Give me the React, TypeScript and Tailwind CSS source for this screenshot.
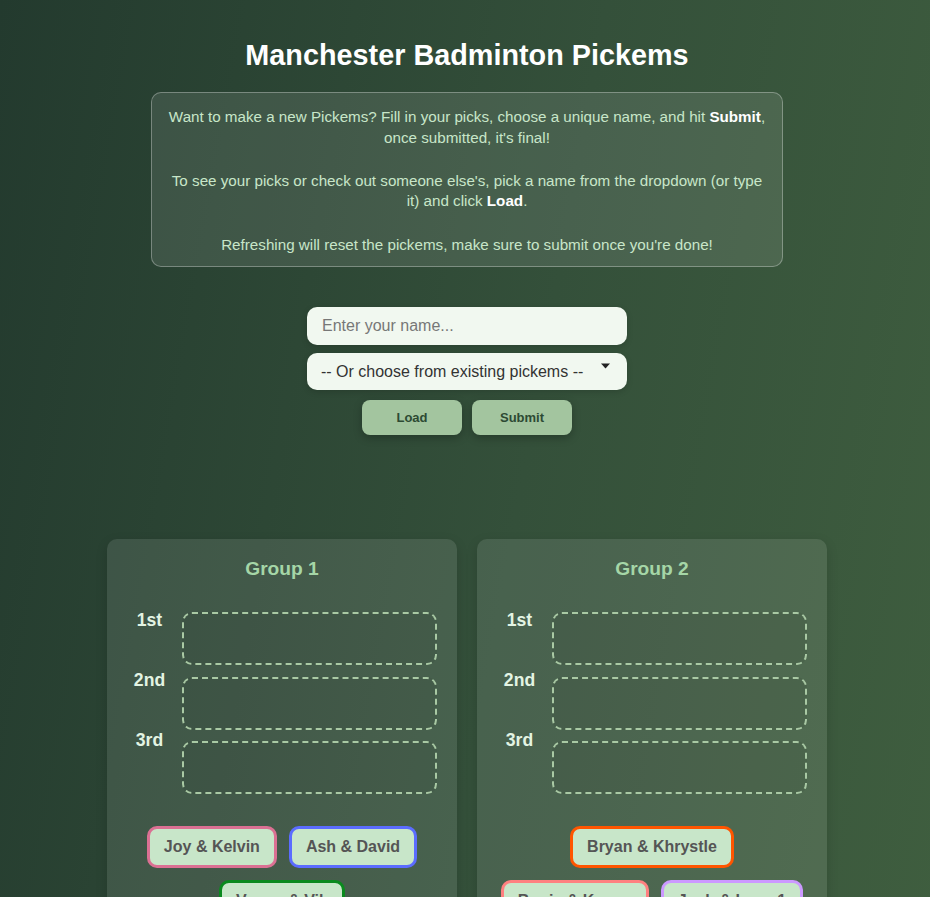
import React from "react";

const slots = ["1st", "2nd", "3rd"];

type Chip = { name: string; color: string };

const groups: { title: string; rows: Chip[][] }[] = [
  {
    title: "Group 1",
    rows: [
      [
        { name: "Joy & Kelvin", color: "border-[#db7093]" },
        { name: "Ash & David", color: "border-[#5b6cff]" },
      ],
      [{ name: "Vonne & Vik", color: "border-[#0a8a1e]" }],
    ],
  },
  {
    title: "Group 2",
    rows: [
      [{ name: "Bryan & Khrystle", color: "border-[#ff5500]" }],
      [
        { name: "Bonie & Kenny", color: "border-[#ff8080]" },
        { name: "Josh & Lucy 1", color: "border-[#cc99ff]" },
      ],
    ],
  },
];

function GroupCard({ title, rows }: { title: string; rows: Chip[][] }) {
  return (
    <div className="w-[350px] rounded-[10px] bg-white/10 px-[20px] pt-[20px] pb-[24px] shadow-[0_4px_12px_rgba(0,0,0,0.15)]">
      <h3 className="text-center text-[19.2px] font-bold leading-[20px] text-[#a5d6a7]">{title}</h3>
      <div className="mt-[33px] flex gap-[10px]">
        <div className="flex w-[45px] flex-col">
          {slots.map((s) => (
            <div key={s} className="h-[60px] text-center text-[17.6px] font-bold leading-[16px] text-[#e3f4e3]">
              {s}
            </div>
          ))}
        </div>
        <div className="flex flex-1 flex-col gap-[11.5px]">
          {slots.map((s) => (
            <div key={s} className="h-[53px] rounded-[10px] border-2 border-dashed border-[#a9c9a4] bg-black/5" />
          ))}
        </div>
      </div>
      <div className="mt-[32px] flex flex-col items-center gap-[12px]">
        {rows.map((row, i) => (
          <div key={i} className="flex justify-center gap-[12px]">
            {row.map((c) => (
              <div
                key={c.name}
                className={`flex h-[42px] items-center whitespace-nowrap rounded-[10px] border-[3px] ${c.color} bg-[#c8e6c9] px-[14px] text-[16px] font-bold text-[#555555]`}
              >
                {c.name}
              </div>
            ))}
          </div>
        ))}
      </div>
    </div>
  );
}

export default function App() {
  return (
    <div
      className="min-h-screen bg-[linear-gradient(100deg,#233a2e_0%,#34503a_55%,#3f5e3f_100%)] pb-[40px] pl-[4px]"
      style={{ fontFamily: '"Liberation Sans", Arial, sans-serif' }}
    >
      <div className="flex flex-col items-center">
        <h1 className="mt-[38px] text-[28.8px] font-bold leading-[34px] text-white">Manchester Badminton Pickems</h1>
        <div className="mt-[20px] w-[632px] rounded-[10px] border border-white/30 bg-white/10 px-[15px] pt-[14px] pb-[11px] text-center text-[15.2px] leading-[20.6px] text-[#c8e6c9]">
          <p>
            Want to make a new Pickems? Fill in your picks, choose a unique name, and hit{" "}
            <b className="text-white">Submit</b>, once submitted, it's final!
          </p>
          <p className="mt-[22.6px]">
            To see your picks or check out someone else's, pick a name from the dropdown (or type it) and click{" "}
            <b className="text-white">Load</b>.
          </p>
          <p className="mt-[22.6px]">Refreshing will reset the pickems, make sure to submit once you're done!</p>
        </div>

        <div className="mt-[40px] flex w-[320px] flex-col gap-[8px]">
          <input
            placeholder="Enter your name..."
            className="h-[38px] w-full rounded-[10px] bg-[#f1f8f0] px-[15px] text-[16px] text-[#333] placeholder:text-[#777] shadow-[0_2px_6px_rgba(0,0,0,0.15)] outline-none"
          />
          <div className="relative">
            <select
              className="h-[37px] w-full appearance-none rounded-[10px] bg-[#f1f8f0] pl-[14px] pr-[30px] text-[16px] text-[#333] shadow-[0_2px_6px_rgba(0,0,0,0.15)] outline-none"
              defaultValue=""
            >
              <option value="">-- Or choose from existing pickems --</option>
            </select>
            <svg className="pointer-events-none absolute right-[17px] top-[10px]" width="9" height="6" viewBox="0 0 9 6">
              <path d="M0 0.5H9L4.5 5.5Z" fill="#222" />
            </svg>
          </div>
        </div>
        <div className="mt-[10px] flex gap-[10px]">
          {["Load", "Submit"].map((b) => (
            <button
              key={b}
              className="h-[35px] w-[100px] rounded-[8px] bg-[#a3c59f] text-[13px] font-bold text-[#2d4a33] shadow-[0_3px_8px_rgba(0,0,0,0.25)]"
            >
              {b}
            </button>
          ))}
        </div>

        <div className="mt-[104px] flex gap-[20px]">
          {groups.map((g) => (
            <GroupCard key={g.title} title={g.title} rows={g.rows} />
          ))}
        </div>
      </div>
    </div>
  );
}
